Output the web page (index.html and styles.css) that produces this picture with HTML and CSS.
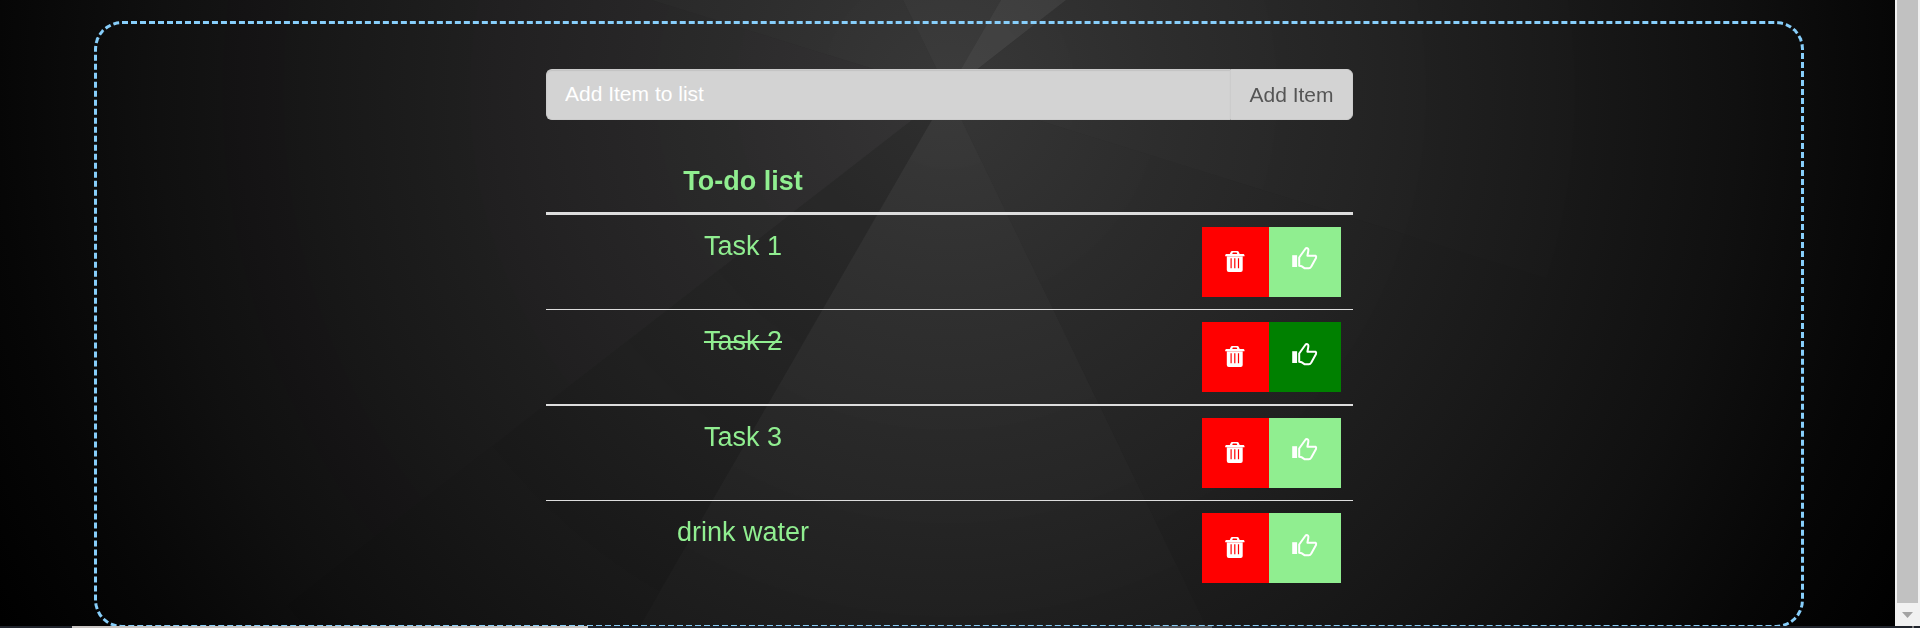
FILE: index.html
```
<!DOCTYPE html>
<html lang="en">
<head>
<meta charset="utf-8">
<title>To-do list</title>
<link rel="stylesheet" href="styles.css">
</head>
<body>
<svg width="0" height="0" class="defs">
  <symbol id="trash" viewBox="0 0 20 21">
    <path fill="currentColor" fill-rule="evenodd" d="M4.800 3 5.800.8Q6.200 0 7 0h5.500q.8 0 1.200.8L14.700 3h4l.8 1v1.200H.2V4L1 3zM7.200 3h5.100l-.7-1.400H7.900zM1.800 5h15.900v14q0 2-2 2H3.800q-2 0-2-2zM5.500 7.300v10h1.200v-10zM9.200 7.300v10h1.200v-10zM12.900 7.300v10h1.200v-10z"/>
  </symbol>
  <symbol id="thumb" viewBox="0 0 26 23">
    <path fill="currentColor" d="M.2 8.200h4.900v11.800H.2z"/>
    <path fill="none" stroke="currentColor" stroke-width="2" stroke-linejoin="round" d="M7.200 18.700V10.500L12.900 2.500Q13.500 1 14.800 1 16.800 1.200 16.300 4L15.400 8.800H23.800Q24.400 9.500 24 11L19.300 19.500Q18.200 21.300 17 21.300H12.800L9.800 19.300z"/>
  </symbol>
</svg>
<div class="page">
  <svg class="rays" viewBox="0 0 1895 626" preserveAspectRatio="none">
    <defs>
      <radialGradient id="fade" gradientUnits="userSpaceOnUse" cx="948" cy="92" r="850">
        <stop offset="0" stop-color="#fff" stop-opacity="1"/>
        <stop offset=".3" stop-color="#fff" stop-opacity=".8"/>
        <stop offset=".65" stop-color="#fff" stop-opacity=".4"/>
        <stop offset="1" stop-color="#fff" stop-opacity="0"/>
      </radialGradient>
      <mask id="m"><rect width="1895" height="626" fill="url(#fade)"/></mask>
    </defs>
    <g mask="url(#m)">
      <path fill="#fff" opacity=".02" d="M948 92 651 0H903z"/>
      <path fill="#fff" opacity=".045" d="M948 92 903 0H1001z"/>
      <path fill="#fff" opacity=".085" d="M948 92 1001 0H1066z"/>
      <path fill="#fff" opacity=".02" d="M948 92 1066 0H1895V387z"/>
      <path fill="#fff" opacity=".01" d="M948 92 1895 387V626H1206z"/>
      <path fill="#fff" opacity=".032" d="M948 92 1206 626H640z"/>
      <path fill="#000" opacity=".1" d="M948 92 640 626H260z"/>
      <path fill="#f0c8ff" opacity=".012" d="M948 92 260 626H0V0H651z"/>
    </g>
  </svg>
  <main class="frame">
    <form class="add">
      <input class="add-input" type="text" placeholder="Add Item to list">
      <button class="add-button" type="button">Add Item</button>
    </form>
    <div class="list">
      <div class="head"><span class="name">To-do list</span></div>
      <div class="row"><span class="name">Task 1</span><div class="actions"><button class="btn del"><svg class="trash"><use href="#trash"/></svg></button><button class="btn ok"><svg class="thumb"><use href="#thumb"/></svg></button></div></div>
      <div class="row row-done"><span class="name done">Task 2</span><div class="actions"><button class="btn del"><svg class="trash"><use href="#trash"/></svg></button><button class="btn ok ok-done"><svg class="thumb"><use href="#thumb"/></svg></button></div></div>
      <div class="row"><span class="name">Task 3</span><div class="actions"><button class="btn del"><svg class="trash"><use href="#trash"/></svg></button><button class="btn ok"><svg class="thumb"><use href="#thumb"/></svg></button></div></div>
      <div class="row"><span class="name">drink water</span><div class="actions"><button class="btn del"><svg class="trash"><use href="#trash"/></svg></button><button class="btn ok"><svg class="thumb thumb-low"><use href="#thumb"/></svg></button></div></div>
    </div>
  </main>
  <div class="scrollbar"><div class="scroll-thumb"></div><div class="scroll-arrow"></div></div>
</div>
<div class="taskbar"><i class="task-search"></i><i class="task-active"></i><i class="task-edge"></i></div>
</body>
</html>
```

FILE: styles.css
```
* { box-sizing: border-box; }
body { margin: 0; height: 628px; overflow: hidden; background: #000; font-family: "Liberation Sans", Arial, sans-serif; }
.defs { position: absolute; }
.page { position: relative; height: 626px; overflow: hidden; display: flex; justify-content: space-between;
  background: radial-gradient(ellipse 1080px 1100px at 948px 92px, #343434 0, #2a2a2a 20%, #222 38%, #191919 56%, #101010 73%, #060606 88%, #000 100%); }
.rays { position: absolute; left: 0; top: 0; width: 1895px; height: 626px; }
.frame { position: relative; width: 1710px; height: 607px; margin: 21px 0 0 94px; border: 3px dashed #87cefa; border-radius: 28px; padding: 45px 448px 0 449px; }
.add { display: flex; width: 807px; height: 51px; }
.add-input { width: 684px; border: 1px solid #ccc; border-right: 0; border-radius: 6px 0 0 6px; background: #d3d3d3; padding: 0 18px 2px; font: 21px "Liberation Sans", Arial, sans-serif; box-shadow: inset 0 1px 1px rgba(0,0,0,.08); outline: 0; }
.add-input::placeholder { color: #fff; opacity: 1; }
.add-button { flex: 1; border: 1px solid #ccc; border-radius: 0 6px 6px 0; background: #d3d3d3; color: #555; font: 21px "Liberation Sans", Arial, sans-serif; padding: 1px 0 0; }
.list { width: 807px; margin-top: 36px; color: #90ee90; font-size: 27px; line-height: 38px; }
.head { height: 59px; border-bottom: 3px solid #ddd; padding-top: 6px; font-weight: bold; display: flex; }
.name { width: 394px; text-align: center; }
.row { display: flex; justify-content: space-between; height: 95px; padding: 12px 12px 0 0; border-bottom: 1px solid #ddd; }
.row-done { height: 96px; border-bottom-width: 2px; }
.row:last-child { border-bottom: 0; }
.done { text-decoration: line-through; }
.actions { display: flex; height: 70px; }
.btn { display: flex; align-items: flex-start; justify-content: center; border: 0; padding: 20px 0 0; color: #fff; }
.del { width: 67px; background: red; padding: 24px 1px 0 0; }
.ok { width: 72px; background: #90ee90; }
.ok-done { background: green; padding-top: 21px; }
.trash { width: 20px; height: 21px; }
.thumb { width: 26px; height: 23px; }
.thumb-low { margin-top: 1px; }
.scrollbar { position: relative; width: 25px; height: 626px; background: #f1f1f1; padding: 0 2px; display: flex; flex-direction: column; align-items: center; gap: 9px; }
.scroll-thumb { width: 21px; height: 603px; background: #c1c1c1; }
.scroll-arrow { width: 11px; height: 6px; background: #a3a3a3; clip-path: polygon(0 0, 100% 0, 50% 100%); }
.taskbar { display: flex; height: 2px; background: #20242c; padding-left: 72px; }
.task-search { width: 516px; background: #c8c4c2; }
.task-active { width: 62px; margin-left: 562px; background: #50545a; }
.task-edge { width: 2px; margin-left: 700px; background: #777; }
```
